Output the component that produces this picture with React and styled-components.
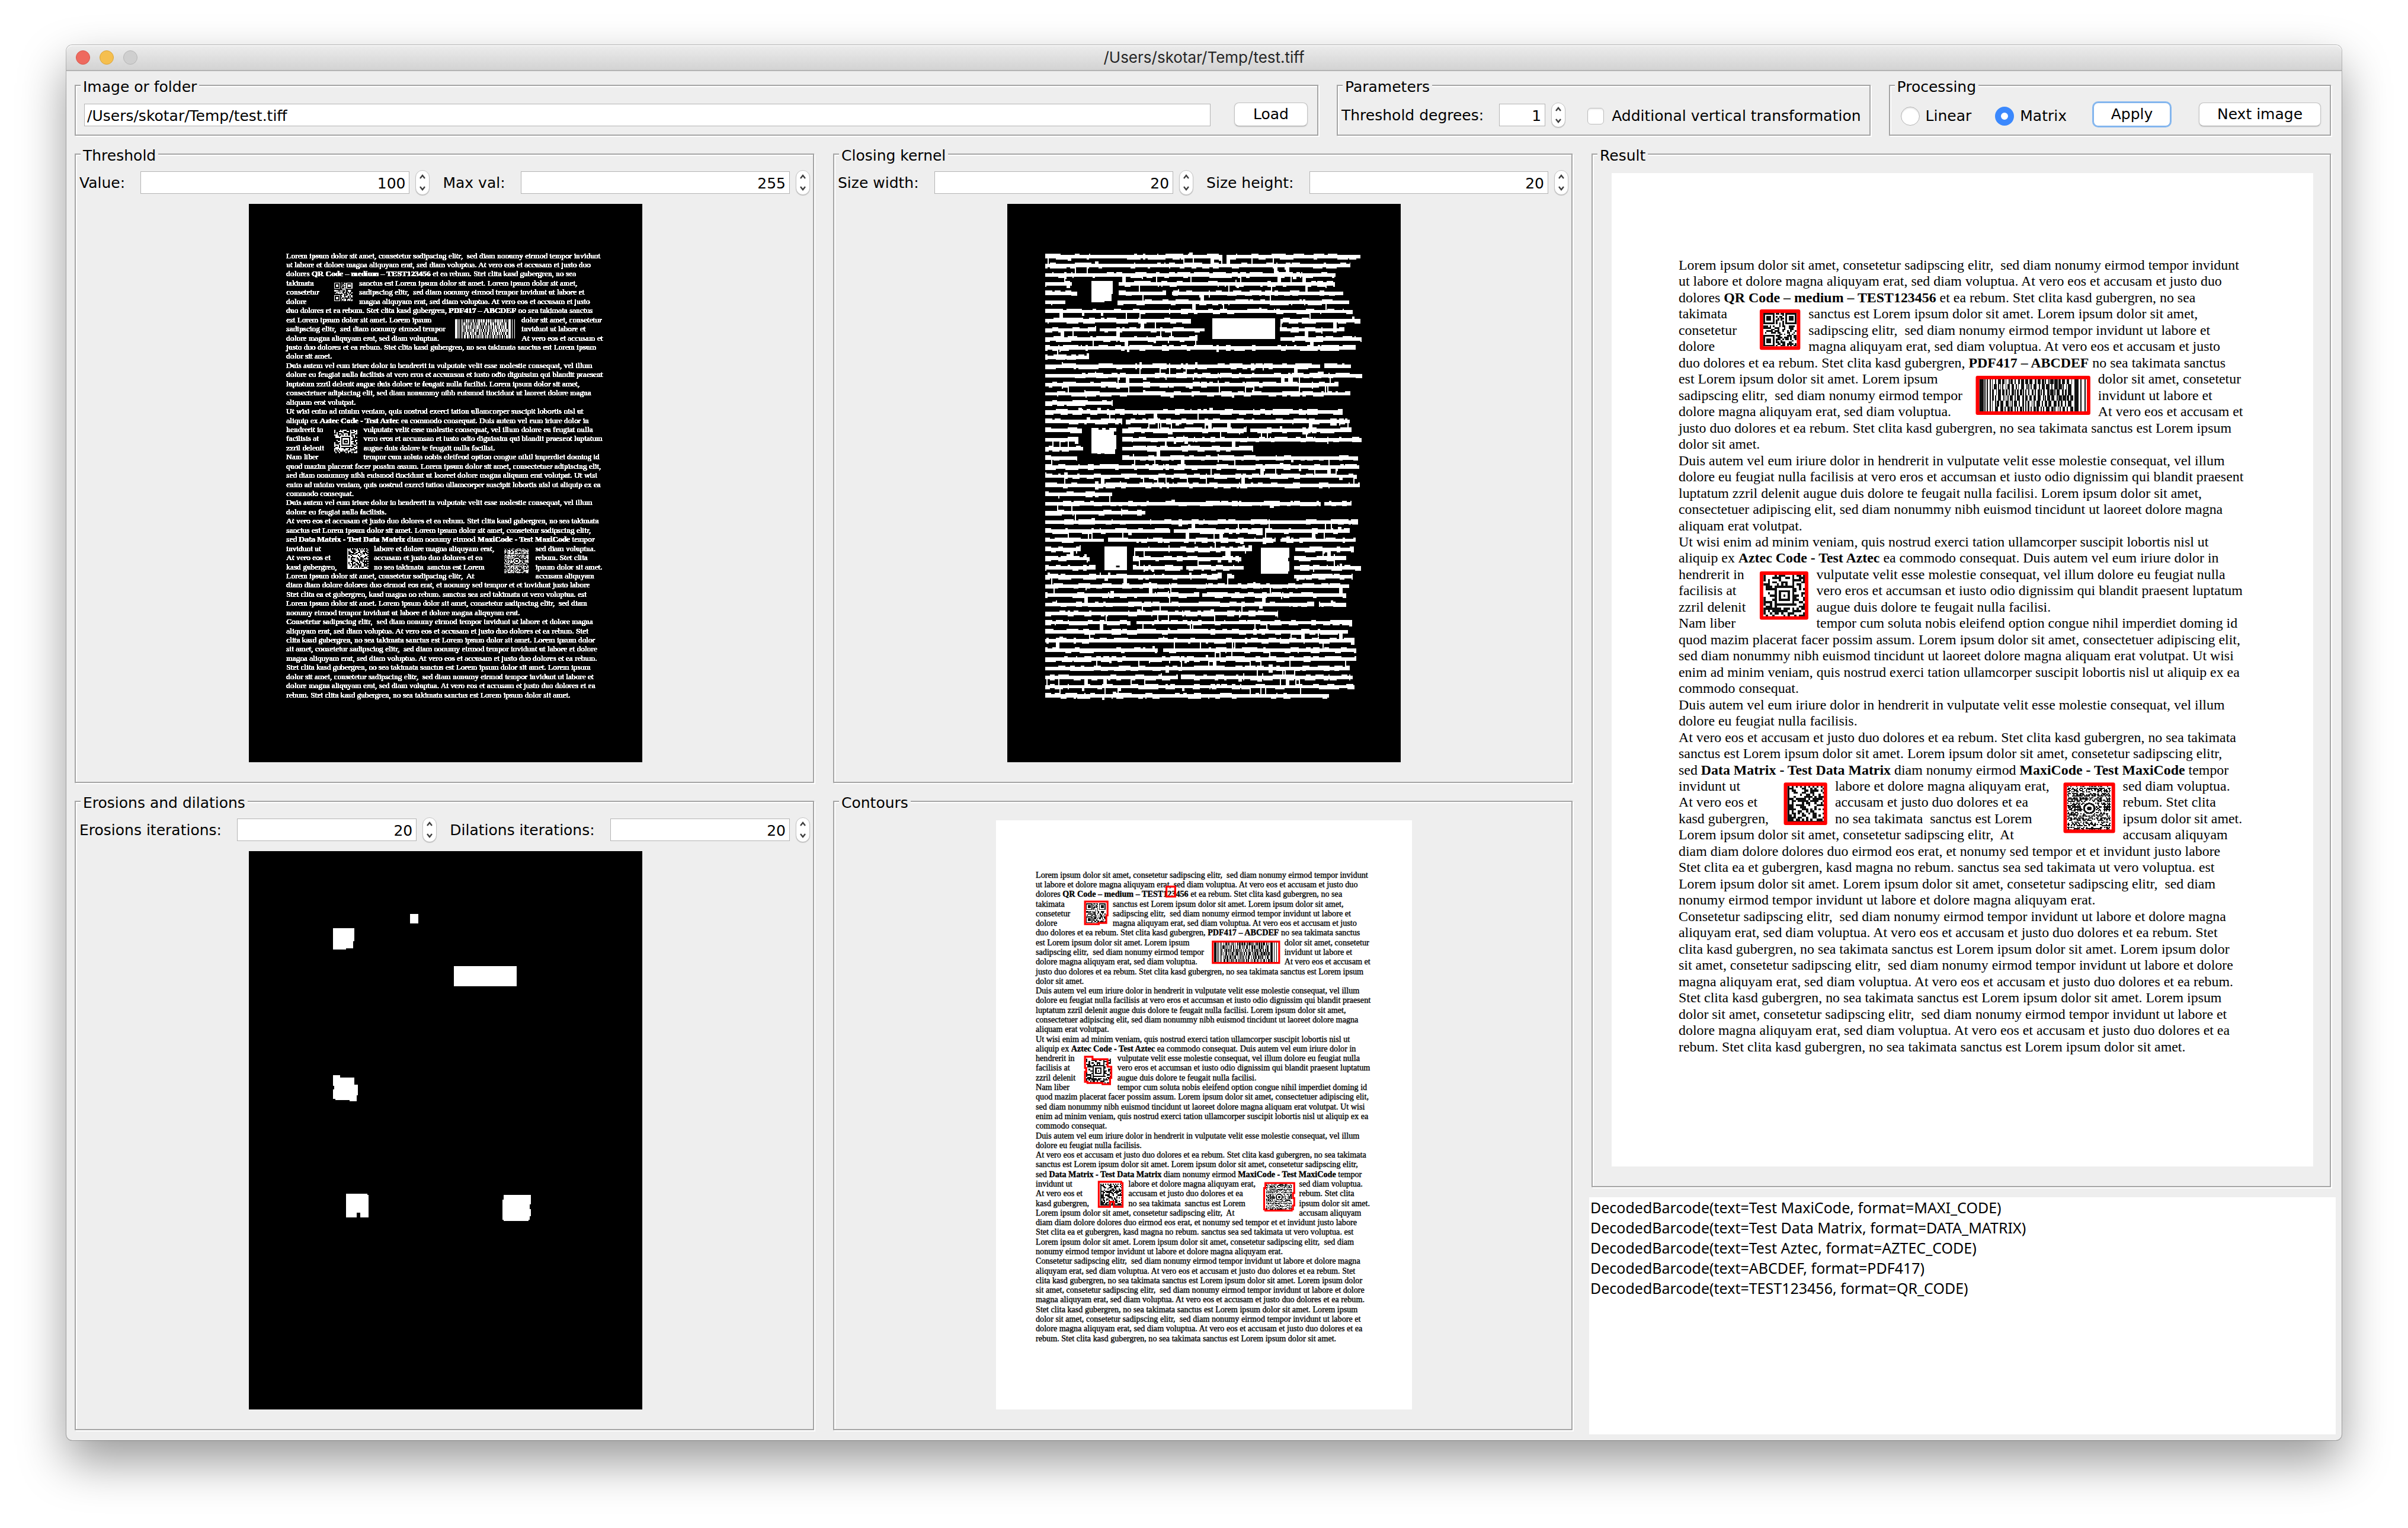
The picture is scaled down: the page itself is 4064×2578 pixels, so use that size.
import React, { useId, useState } from "react";
import styled, { createGlobalStyle } from "styled-components";

const GlobalStyle = createGlobalStyle`
  *, *::before, *::after { box-sizing: border-box; }
  body { margin: 0; background: #ffffff; }
`;

const UI_FONT = `"DejaVu Sans", "Noto Sans", sans-serif`;
const LOG_FONT = `"Noto Sans", "Open Sans", sans-serif`;
const TITLE_FONT = `Inter, Roboto, sans-serif`;

/* ---------- window chrome ---------- */

const Desktop = styled.div`
  min-height: 100vh;
  padding: 76px 112px 148px;
  font-family: ${UI_FONT};
  font-size: 25px;
  line-height: 34px;
  color: #000000;
`;

const Window = styled.main`
  background: #eeeeee;
  border-radius: 10px;
  box-shadow: 0 0 0 1px rgba(0, 0, 0, 0.24), 0 36px 80px rgba(0, 0, 0, 0.4);
`;

const TitleBar = styled.header`
  display: grid;
  grid-template-columns: 1fr auto 1fr;
  align-items: center;
  height: 44px;
  padding: 0 16px;
  border-radius: 10px 10px 0 0;
  border-bottom: 2px solid #b4b4b4;
  background: linear-gradient(#ececec, #d3d3d3);
  box-shadow: inset 0 2px 0 #f6f6f6;
`;

const Lights = styled.div`
  display: flex;
  gap: 16px;
`;

const Light = styled.button`
  width: 24px;
  height: 24px;
  padding: 0;
  border: 1px solid ${(p) => p.$edge};
  border-radius: 50%;
  background: ${(p) => p.$fill};
`;

const Title = styled.h1`
  margin: 0;
  font-family: ${TITLE_FONT};
  font-size: 26px;
  font-weight: 400;
  line-height: 34px;
  color: #262626;
`;

const TopRow = styled.div`
  display: flex;
  gap: 31px;
  padding: 8px 18px 15px 14px;
`;

const Columns = styled.div`
  display: grid;
  grid-template-columns: repeat(3, minmax(0, 1fr));
`;

const Column = styled.div`
  display: flex;
  flex-direction: column;
  gap: 15px;
  padding: 0 18px 17px 14px;
`;

const ResultColumn = styled.div`
  display: flex;
  flex-direction: column;
  gap: 17px;
  padding: 0 10px 10px;
`;

/* ---------- etched group box ---------- */

const Box = styled.fieldset`
  flex: ${(p) => (p.$grow ? "1 1 0" : "none")};
  min-width: 0;
  margin: ${(p) => (p.$inset ? "0 8px 0 4px" : "0")};
  padding: 0;
  border: 2px solid #a5a5a5;
  box-shadow: 2px 2px 0 #ffffff, inset 2px 2px 0 #ffffff;
`;

const Legend = styled.legend`
  margin-left: 8px;
  padding: 6px 4px 0;
  line-height: 26px;
  background: #eeeeee;
`;

const Bar = styled.div`
  display: flex;
  align-items: center;
  height: 67px;
  padding: 13px ${(p) => p.$right}px 12px ${(p) => p.$left}px;
`;

const SpinnerCells = styled.div`
  display: grid;
  grid-template-columns: auto minmax(0, 1fr) auto minmax(0, 1fr);
  align-items: center;
  padding: 11px 5px 15px 6px;
`;

const Preview = styled.div`
  display: flex;
  justify-content: center;
  padding: ${(p) => (p.$spaced ? 16 : 0)}px 0 33px 4px;
`;

const Picture = styled.svg`
  display: block;
  width: ${(p) => p.$width}px;
  height: ${(p) => p.$height}px;
  background: ${(p) => p.$paper};
`;

/* ---------- controls ---------- */

const Field = styled.input`
  flex: 1 1 0;
  width: 0;
  min-width: 0;
  height: 38px;
  padding: 2px ${(p) => (p.$number ? 6 : 4)}px 0;
  border: 1px solid #b4b4b4;
  border-radius: 0;
  outline: none;
  background: #ffffff;
  font: inherit;
  color: inherit;
  text-align: ${(p) => (p.$number ? "right" : "left")};
`;

const SpinnerGroup = styled.div`
  width: ${(p) => (p.$fixed ? "112px" : "auto")};
  display: flex;
  align-items: center;
  gap: 10px;
  margin-left: 26px;
`;

const FieldLabel = styled.label`
  margin-left: ${(p) => (p.$next ? 22 : 0)}px;
  padding-top: 2px;
  white-space: nowrap;
`;

const Stepper = styled.div`
  flex: none;
  display: grid;
  width: 24px;
  height: 42px;
  border: 1px solid #c4c4c4;
  border-radius: 12px;
  background: #ffffff;
  box-shadow: 0 1px 1px rgba(0, 0, 0, 0.2);
`;

const StepButton = styled.button`
  display: grid;
  justify-items: center;
  align-items: ${(p) => (p.$down ? "start" : "end")};
  padding: 5px 0;
  border: 0;
  background: transparent;
`;

const Button = styled.button`
  align-self: flex-start;
  height: 40px;
  width: ${(p) => p.$width}px;
  margin-left: ${(p) => p.$before}px;
  padding: 0;
  border: 1px solid ${(p) => (p.$focused ? "#7fb1ea" : "#c2c2c2")};
  border-bottom-color: ${(p) => (p.$focused ? "#7fb1ea" : "#aaaaaa")};
  border-radius: 8px;
  background: #ffffff;
  box-shadow: ${(p) =>
    p.$focused ? "0 0 0 2px #86b8f0" : "0 1px 2px rgba(0, 0, 0, 0.16)"};
  font: inherit;
  line-height: 38px;
  color: inherit;
  white-space: nowrap;
`;

const Choice = styled.label`
  display: flex;
  align-items: center;
  gap: ${(p) => p.$gap}px;
  margin-left: ${(p) => p.$before}px;
  padding-top: 4px;
  white-space: nowrap;
`;

const Check = styled.input`
  appearance: none;
  width: 28px;
  height: 28px;
  margin: 0;
  border: 1px solid #bdbdbd;
  border-radius: 6px;
  background: #ffffff;
  box-shadow: inset 0 2px 2px rgba(0, 0, 0, 0.08);
  &:checked { background: #3b88fd; }
`;

const Radio = styled.input`
  appearance: none;
  width: 32px;
  height: 32px;
  margin: 0;
  border: 1px solid #b4b4b4;
  border-radius: 50%;
  background: #ffffff;
  box-shadow: inset 0 2px 2px rgba(0, 0, 0, 0.1);
  &:checked {
    border: 10px solid #3b88fd;
    box-shadow: none;
  }
`;

const Log = styled.textarea`
  flex: 1 1 auto;
  display: block;
  width: 100%;
  margin: 0;
  padding: 0 2px;
  border: 0;
  outline: none;
  resize: none;
  background: #ffffff;
  font: inherit;
  font-family: ${LOG_FONT};
  color: inherit;
`;

/* ---------- scanned page ---------- */

const PageText = styled.text`
  font-family: "Liberation Serif", serif;
  font-size: 120px;
  white-space: pre;
`;

const BoldSpan = styled.tspan`
  font-weight: 700;
`;

const LEFT = 568;
const FIRST = 819;
const PITCH = 138;

// Each row is a list of [x, text] runs; *stars* mark bold words.
const at = (text) => [[LEFT, text]];
const ROWS = [
  at("Lorem ipsum dolor sit amet, consetetur sadipscing elitr,  sed diam nonumy eirmod tempor invidunt"),
  at("ut labore et dolore magna aliquyam erat, sed diam voluptua. At vero eos et accusam et justo duo"),
  at("dolores *QR Code – medium – TEST123456* et ea rebum. Stet clita kasd gubergren, no sea"),
  [[LEFT, "takimata"], [1670, "sanctus est Lorem ipsum dolor sit amet. Lorem ipsum dolor sit amet,"]],
  [[LEFT, "consetetur"], [1670, "sadipscing elitr,  sed diam nonumy eirmod tempor invidunt ut labore et"]],
  [[LEFT, "dolore"], [1670, "magna aliquyam erat, sed diam voluptua. At vero eos et accusam et justo"]],
  at("duo dolores et ea rebum. Stet clita kasd gubergren, *PDF417 – ABCDEF* no sea takimata sanctus"),
  [[LEFT, "est Lorem ipsum dolor sit amet. Lorem ipsum"], [4125, "dolor sit amet, consetetur"]],
  [[LEFT, "sadipscing elitr,  sed diam nonumy eirmod tempor"], [4125, "invidunt ut labore et"]],
  [[LEFT, "dolore magna aliquyam erat, sed diam voluptua."], [4125, "At vero eos et accusam et"]],
  at("justo duo dolores et ea rebum. Stet clita kasd gubergren, no sea takimata sanctus est Lorem ipsum"),
  at("dolor sit amet."),
  at("Duis autem vel eum iriure dolor in hendrerit in vulputate velit esse molestie consequat, vel illum"),
  at("dolore eu feugiat nulla facilisis at vero eros et accumsan et iusto odio dignissim qui blandit praesent"),
  at("luptatum zzril delenit augue duis dolore te feugait nulla facilisi. Lorem ipsum dolor sit amet,"),
  at("consectetuer adipiscing elit, sed diam nonummy nibh euismod tincidunt ut laoreet dolore magna"),
  at("aliquam erat volutpat."),
  at("Ut wisi enim ad minim veniam, quis nostrud exerci tation ullamcorper suscipit lobortis nisl ut"),
  at("aliquip ex *Aztec Code - Test Aztec* ea commodo consequat. Duis autem vel eum iriure dolor in"),
  [[LEFT, "hendrerit in"], [1736, "vulputate velit esse molestie consequat, vel illum dolore eu feugiat nulla"]],
  [[LEFT, "facilisis at"], [1736, "vero eros et accumsan et iusto odio dignissim qui blandit praesent luptatum"]],
  [[LEFT, "zzril delenit"], [1736, "augue duis dolore te feugait nulla facilisi."]],
  [[LEFT, "Nam liber"], [1736, "tempor cum soluta nobis eleifend option congue nihil imperdiet doming id"]],
  at("quod mazim placerat facer possim assum. Lorem ipsum dolor sit amet, consectetuer adipiscing elit,"),
  at("sed diam nonummy nibh euismod tincidunt ut laoreet dolore magna aliquam erat volutpat. Ut wisi"),
  at("enim ad minim veniam, quis nostrud exerci tation ullamcorper suscipit lobortis nisl ut aliquip ex ea"),
  at("commodo consequat."),
  at("Duis autem vel eum iriure dolor in hendrerit in vulputate velit esse molestie consequat, vel illum"),
  at("dolore eu feugiat nulla facilisis."),
  at("At vero eos et accusam et justo duo dolores et ea rebum. Stet clita kasd gubergren, no sea takimata"),
  at("sanctus est Lorem ipsum dolor sit amet. Lorem ipsum dolor sit amet, consetetur sadipscing elitr,"),
  at("sed *Data Matrix - Test Data Matrix* diam nonumy eirmod *MaxiCode - Test MaxiCode* tempor"),
  [[LEFT, "invidunt ut"], [1894, "labore et dolore magna aliquyam erat,"], [4335, "sed diam voluptua."]],
  [[LEFT, "At vero eos et"], [1894, "accusam et justo duo dolores et ea"], [4335, "rebum. Stet clita"]],
  [[LEFT, "kasd gubergren,"], [1894, "no sea takimata  sanctus est Lorem"], [4335, "ipsum dolor sit amet."]],
  [[LEFT, "Lorem ipsum dolor sit amet, consetetur sadipscing elitr,  At"], [4335, "accusam aliquyam"]],
  at("diam diam dolore dolores duo eirmod eos erat, et nonumy sed tempor et et invidunt justo labore"),
  at("Stet clita ea et gubergren, kasd magna no rebum. sanctus sea sed takimata ut vero voluptua. est"),
  at("Lorem ipsum dolor sit amet. Lorem ipsum dolor sit amet, consetetur sadipscing elitr,  sed diam"),
  at("nonumy eirmod tempor invidunt ut labore et dolore magna aliquyam erat."),
  at("Consetetur sadipscing elitr,  sed diam nonumy eirmod tempor invidunt ut labore et dolore magna"),
  at("aliquyam erat, sed diam voluptua. At vero eos et accusam et justo duo dolores et ea rebum. Stet"),
  at("clita kasd gubergren, no sea takimata sanctus est Lorem ipsum dolor sit amet. Lorem ipsum dolor"),
  at("sit amet, consetetur sadipscing elitr,  sed diam nonumy eirmod tempor invidunt ut labore et dolore"),
  at("magna aliquyam erat, sed diam voluptua. At vero eos et accusam et justo duo dolores et ea rebum."),
  at("Stet clita kasd gubergren, no sea takimata sanctus est Lorem ipsum dolor sit amet. Lorem ipsum"),
  at("dolor sit amet, consetetur sadipscing elitr,  sed diam nonumy eirmod tempor invidunt ut labore et"),
  at("dolore magna aliquyam erat, sed diam voluptua. At vero eos et accusam et justo duo dolores et ea"),
  at("rebum. Stet clita kasd gubergren, no sea takimata sanctus est Lorem ipsum dolor sit amet."),
];

const randomizer = (seed) => {
  let s = seed;
  return () => {
    s = (s * 1664525 + 1013904223) % 4294967296;
    return s / 4294967296;
  };
};

const modules = (cols, rows, isDark) => {
  let d = "";
  for (let y = 0; y < rows; y++)
    for (let x = 0; x < cols; x++) if (isDark(x, y)) d += `M${x} ${y}h1v1h-1z`;
  return d;
};

const finder = (x, y) => {
  const ring = Math.max(Math.abs(x - 3), Math.abs(y - 3));
  return ring === 3 || ring <= 1;
};

const qrRandom = randomizer(11);
const QR = modules(21, 21, (x, y) => {
  const r = qrRandom() < 0.5;
  if (x < 8 && y < 8) return x < 7 && y < 7 && finder(x, y);
  if (x > 12 && y < 8) return x > 13 && y < 7 && finder(x - 14, y);
  if (x < 8 && y > 12) return x < 7 && y > 13 && finder(x, y - 14);
  if (y === 6) return x % 2 === 0;
  if (x === 6) return y % 2 === 0;
  return r;
});

const aztecRandom = randomizer(29);
const AZTEC = modules(19, 19, (x, y) => {
  const r = aztecRandom() < 0.5;
  const ring = Math.max(Math.abs(x - 9), Math.abs(y - 9));
  return ring <= 4 ? ring % 2 === 0 : r;
});

const matrixRandom = randomizer(47);
const DATA_MATRIX = modules(18, 18, (x, y) => {
  const r = matrixRandom() < 0.48;
  if (x === 0 || y === 17) return true;
  if (y === 0) return x % 2 === 0;
  if (x === 17) return y % 2 === 1;
  return r;
});

const maxiRandom = randomizer(83);
const MAXI = (() => {
  let d = "";
  for (let y = 0; y < 33; y++)
    for (let x = 0; x < 29; x++) {
      const r = maxiRandom() < 0.66;
      const cx = x + (y % 2) / 2 + 0.5;
      if (r && Math.hypot(cx - 15, (y - 16) * 0.9) > 5)
        d += `M${cx - 0.5} ${y}h0.9v0.9h-0.9z`;
    }
  return d;
})();

const pdfRandom = randomizer(5);
const PDF = (() => {
  let d = "M0 0h4v24h-4zM5 0h1v24h-1zM7 0h1v24h-1zM10 0h1v24h-1zM91 0h4v24h-4zM97 0h1v24h-1zM101 0h1v24h-1z";
  for (let row = 0; row < 6; row++) {
    let x = 12;
    while (x < 89) {
      const bar = 1 + Math.floor(pdfRandom() * 3);
      const gap = 1 + Math.floor(pdfRandom() * 2);
      d += `M${x} ${row * 4}h${bar}v4h-${bar}z`;
      x += bar + gap;
    }
  }
  return d;
})();

function Codes({ ink }) {
  return (
    <g fill={ink} shapeRendering="crispEdges">
      <svg x="1286" y="1186" width="282" height="282" viewBox="0 0 21 21"><path d={QR} /></svg>
      <svg x="3118" y="1738" width="912" height="290" viewBox="0 0 103 24" preserveAspectRatio="none">
        <path d={PDF} />
      </svg>
      <svg x="1288" y="3404" width="355" height="355" viewBox="0 0 19 19"><path d={AZTEC} /></svg>
      <svg x="1490" y="5190" width="318" height="318" viewBox="0 0 18 18"><path d={DATA_MATRIX} /></svg>
      <svg x="3862" y="5196" width="378" height="378" viewBox="0 0 30 33" preserveAspectRatio="none">
        <path d={MAXI} />
        <circle cx="15" cy="16.5" r="1.5" />
        <circle cx="15" cy="16.5" r="3.6" fill="none" stroke={ink} strokeWidth="1.3" />
      </svg>
    </g>
  );
}

function ScanText({ ink, weight = 0, filter }) {
  return (
    <g fill={ink} stroke={weight ? ink : "none"} strokeWidth={weight} filter={filter}>
      {ROWS.map((runs, row) =>
        runs.map(([x, text]) => (
          <PageText key={`${row}-${x}`} x={x} y={FIRST + row * PITCH}>
            {text.split("*").map((part, i) =>
              i % 2 ? <BoldSpan key={i}>{part}</BoldSpan> : part
            )}
          </PageText>
        ))
      )}
    </g>
  );
}

/* Detected regions, on the 664 x 942 grid of the processed scan. */
const REGIONS = [
  "272,106 286,106 286,122 272,122",
  "142,130 178,130 178,152 176,152 176,164 164,164 164,166 142,166",
  "346,194 452,194 452,228 346,228",
  "142,378 154,378 154,382 178,382 178,394 184,394 184,412 182,412 182,422 170,422 170,420 146,420 146,418 142,418 142,402 144,402 144,396 142,396",
  "164,578 200,578 200,580 202,580 202,618 188,618 188,610 182,610 182,618 164,618",
  "430,580 476,580 476,596 474,596 474,604 476,604 476,616 474,616 474,622 472,622 472,624 430,624 430,622 428,622 428,588 430,588",
];

/* Spans of white left on every row after closing. */
const SPANS = [
  [188, 855, 874, 1380], [188, 1342], [188, 1286], [188, 290, 466, 1284],
  [188, 310, 466, 645, 668, 1316], [188, 264, 461, 1338], [188, 1350],
  [188, 740, 1078, 1380], [188, 380, 394, 790, 1075, 1320], [188, 765, 1078, 1384],
  [188, 1362], [188, 355], [188, 1228, 1243, 1345], [188, 1388], [188, 1297],
  [188, 1342], [188, 444], [188, 1313], [188, 480, 493, 1340],
  [188, 327, 480, 950, 963, 1346], [188, 313, 480, 1384], [188, 331, 480, 975],
  [188, 309, 480, 1371], [188, 1376], [188, 1366], [188, 1378], [188, 441],
  [188, 1230, 1243, 1346], [188, 568], [188, 1371], [188, 660, 675, 1010, 1020, 1340],
  [188, 410, 425, 1060, 1078, 1362], [188, 323, 524, 970, 1133, 1355],
  [188, 357, 520, 930, 1130, 1326], [188, 378, 520, 708, 722, 938, 1130, 1382],
  [188, 855, 876, 904, 1130, 1352], [188, 1337], [188, 770, 783, 1326],
  [188, 1205, 1223, 1326], [188, 1068], [188, 512, 533, 1348], [188, 1333],
  [188, 1357], [188, 615, 635, 1365], [188, 1364], [188, 1340],
  [188, 690, 702, 1352], [188, 1357], [188, 1262],
].map((row) => row.map((v) => (v - 45) * 4));

const covers = (row, x) => {
  if (!row) return false;
  for (let i = 0; i < row.length; i += 2)
    if (x >= row[i] && x + 60 <= row[i + 1]) return true;
  return false;
};

const CLOSED = (() => {
  const random = randomizer(7);
  let d = "";
  SPANS.forEach((row, i) => {
    const top = FIRST + i * PITCH - 50;
    for (let s = 0; s < row.length; s += 2) {
      let x = row[s];
      while (x < row[s + 1]) {
        const w = Math.min(18 * (1 + Math.floor(random() * 6)), row[s + 1] - x);
        const a = random();
        const b = random();
        const up = a > 0.95 && w < 60 ? 36 : a > 0.6 ? 18 : 0;
        const down = b > 0.95 && w < 60 ? 36 : b > 0.68 ? 16 : 0;
        d += `M${x} ${top - up}h${w}v${52 + up + down}h-${w}z`;
        if (random() < 0.09 && covers(SPANS[i + 1], x)) {
          const c = random() < 0.75 ? 18 : 54;
          d += `M${x} ${top}h${c}v140h-${c}z`;
        }
        x += w;
      }
    }
  });
  return d;
})();

const PAGE = "0 0 5950 8420";

function ThresholdPicture() {
  return (
    <Picture $width={664} $height={942} $paper="#000000" viewBox={PAGE} preserveAspectRatio="none" role="img" aria-label="Threshold preview">
      <filter id="hard-edge" x="0" y="0" width="1" height="1">
        <feComponentTransfer>
          <feFuncA type="discrete" tableValues="0 0 1 1 1" />
        </feComponentTransfer>
      </filter>
      <ScanText ink="#ffffff" weight={5} filter="url(#hard-edge)" />
      <Codes ink="#ffffff" />
    </Picture>
  );
}

function ClosingPicture() {
  return (
    <Picture $width={664} $height={942} $paper="#000000" viewBox={PAGE} preserveAspectRatio="none" role="img" aria-label="Closing preview">
      <g fill="#ffffff" shapeRendering="crispEdges">
        <path d={CLOSED} />
        <path d="M1268 1160h324v200h-18v110h-100v12h-206z" />
        <path d="M3100 1726h948v312h-948z" />
        <path d="M1268 3380h110v22h54v-22h54v22h54v-22h108v54h-36v54h36v210h-18v74h-160v-10h-54v10h-54v-10h-94z" />
        <path d="M1468 5166h340v360h-340z" />
        <path d="M3836 5182h428v150h-14v60h14v150h-16v36h-412z" />
      </g>
      <path d="M1645 5455h54v26h-54z" />
    </Picture>
  );
}

function ErosionPicture() {
  return (
    <Picture $width={664} $height={942} $paper="#000000" viewBox="0 0 664 942" role="img" aria-label="Erosion and dilation preview">
      {REGIONS.map((points) => (
        <polygon key={points} points={points} fill="#ffffff" />
      ))}
    </Picture>
  );
}

function ContoursPicture() {
  return (
    <Picture $width={702} $height={994} $paper="#ffffff" viewBox={PAGE} preserveAspectRatio="none" role="img" aria-label="Contours preview">
      <ScanText ink="#000000" weight={3} />
      <Codes ink="#111111" />
      <g transform="scale(8.961 8.938)" fill="none" stroke="#ff0000" strokeWidth="3">
        {REGIONS.map((points) => (
          <polygon key={points} points={points} />
        ))}
      </g>
    </Picture>
  );
}

function ResultPicture() {
  return (
    <Picture $width={1184} $height={1676} $paper="#ffffff" viewBox={PAGE} preserveAspectRatio="none" role="img" aria-label="Result preview">
      <ScanText ink="#000000" />
      <Codes ink="#111111" />
      <g fill="none" stroke="#ff0000" strokeWidth="30" strokeLinejoin="round">
        <rect x="1271" y="1171" width="314" height="312" />
        <rect x="3103" y="1733" width="942" height="302" />
        <rect x="1271" y="3391" width="382" height="380" />
        <rect x="1475" y="5181" width="338" height="330" />
        <rect x="3847" y="5181" width="408" height="398" />
      </g>
    </Picture>
  );
}

/* ---------- composite controls ---------- */

function Group({ title, grow, inset, children }) {
  return (
    <Box $grow={grow} $inset={inset}>
      <Legend>{title}</Legend>
      {children}
    </Box>
  );
}

function Chevron({ down }) {
  return (
    <svg width="12" height="9" viewBox="0 0 12 9" aria-hidden="true">
      <path d={down ? "M2 2l4 5 4-5" : "M2 7l4-5 4 5"} fill="none" stroke="#3c3c3c" strokeWidth="2.4" />
    </svg>
  );
}

function Spinner({ label, initial, next, fixed }) {
  const id = useId();
  const [value, setValue] = useState(initial);
  return (
    <>
      <FieldLabel htmlFor={id} $next={next}>{label}</FieldLabel>
      <SpinnerGroup $fixed={fixed}>
        <Field id={id} $number value={value} onChange={(e) => setValue(e.target.value)} />
        <Stepper>
          <StepButton type="button" aria-label={`Increase ${label}`} onClick={() => setValue(Number(value) + 1)}>
            <Chevron />
          </StepButton>
          <StepButton $down type="button" aria-label={`Decrease ${label}`} onClick={() => setValue(Number(value) - 1)}>
            <Chevron down />
          </StepButton>
        </Stepper>
      </SpinnerGroup>
    </>
  );
}

function SpinnerPair({ first, second }) {
  return (
    <SpinnerCells>
      <Spinner label={first[0]} initial={first[1]} />
      <Spinner label={second[0]} initial={second[1]} next />
    </SpinnerCells>
  );
}

const DECODED = [
  "DecodedBarcode(text=Test MaxiCode, format=MAXI_CODE)",
  "DecodedBarcode(text=Test Data Matrix, format=DATA_MATRIX)",
  "DecodedBarcode(text=Test Aztec, format=AZTEC_CODE)",
  "DecodedBarcode(text=ABCDEF, format=PDF417)",
  "DecodedBarcode(text=TEST123456, format=QR_CODE)",
].join("\n");

export default function App() {
  return (
    <Desktop>
      <GlobalStyle />
      <Window>
        <TitleBar>
          <Lights>
            <Light type="button" aria-label="Close" $fill="#ee6a5f" $edge="#d8564b" />
            <Light type="button" aria-label="Minimize" $fill="#f5bf4f" $edge="#dba53a" />
            <Light type="button" aria-label="Zoom" $fill="#cfcfcf" $edge="#b6b6b6" />
          </Lights>
          <Title>/Users/skotar/Temp/test.tiff</Title>
        </TitleBar>

        <TopRow>
          <Group title="Image or folder" grow>
            <Bar $left={14} $right={16}>
              <Field aria-label="Image or folder" defaultValue="/Users/skotar/Temp/test.tiff" />
              <Button type="button" $width={124} $before={40}>Load</Button>
            </Bar>
          </Group>
          <Group title="Parameters">
            <Bar $left={6} $right={14}>
              <Spinner label="Threshold degrees:" initial={1} fixed />
              <Choice $gap={13} $before={37}>
                <Check type="checkbox" />
                Additional vertical transformation
              </Choice>
            </Bar>
          </Group>
          <Group title="Processing">
            <Bar $left={18} $right={15}>
              <Choice $gap={10} $before={0}>
                <Radio type="radio" name="processing" />
                Linear
              </Choice>
              <Choice $gap={10} $before={40}>
                <Radio type="radio" name="processing" defaultChecked />
                Matrix
              </Choice>
              <Button type="button" $width={130} $before={45} $focused>Apply</Button>
              <Button type="button" $width={206} $before={48}>Next image</Button>
            </Bar>
          </Group>
        </TopRow>

        <Columns>
          <Column>
            <Group title="Threshold">
              <SpinnerPair first={["Value:", 100]} second={["Max val:", 255]} />
              <Preview><ThresholdPicture /></Preview>
            </Group>
            <Group title="Erosions and dilations">
              <SpinnerPair first={["Erosions iterations:", 20]} second={["Dilations iterations:", 20]} />
              <Preview><ErosionPicture /></Preview>
            </Group>
          </Column>
          <Column>
            <Group title="Closing kernel">
              <SpinnerPair first={["Size width:", 20]} second={["Size height:", 20]} />
              <Preview><ClosingPicture /></Preview>
            </Group>
            <Group title="Contours">
              <Preview $spaced><ContoursPicture /></Preview>
            </Group>
          </Column>
          <ResultColumn>
            <Group title="Result" inset>
              <Preview $spaced><ResultPicture /></Preview>
            </Group>
            <Log aria-label="Decoded barcodes" readOnly value={DECODED} />
          </ResultColumn>
        </Columns>
      </Window>
    </Desktop>
  );
}
